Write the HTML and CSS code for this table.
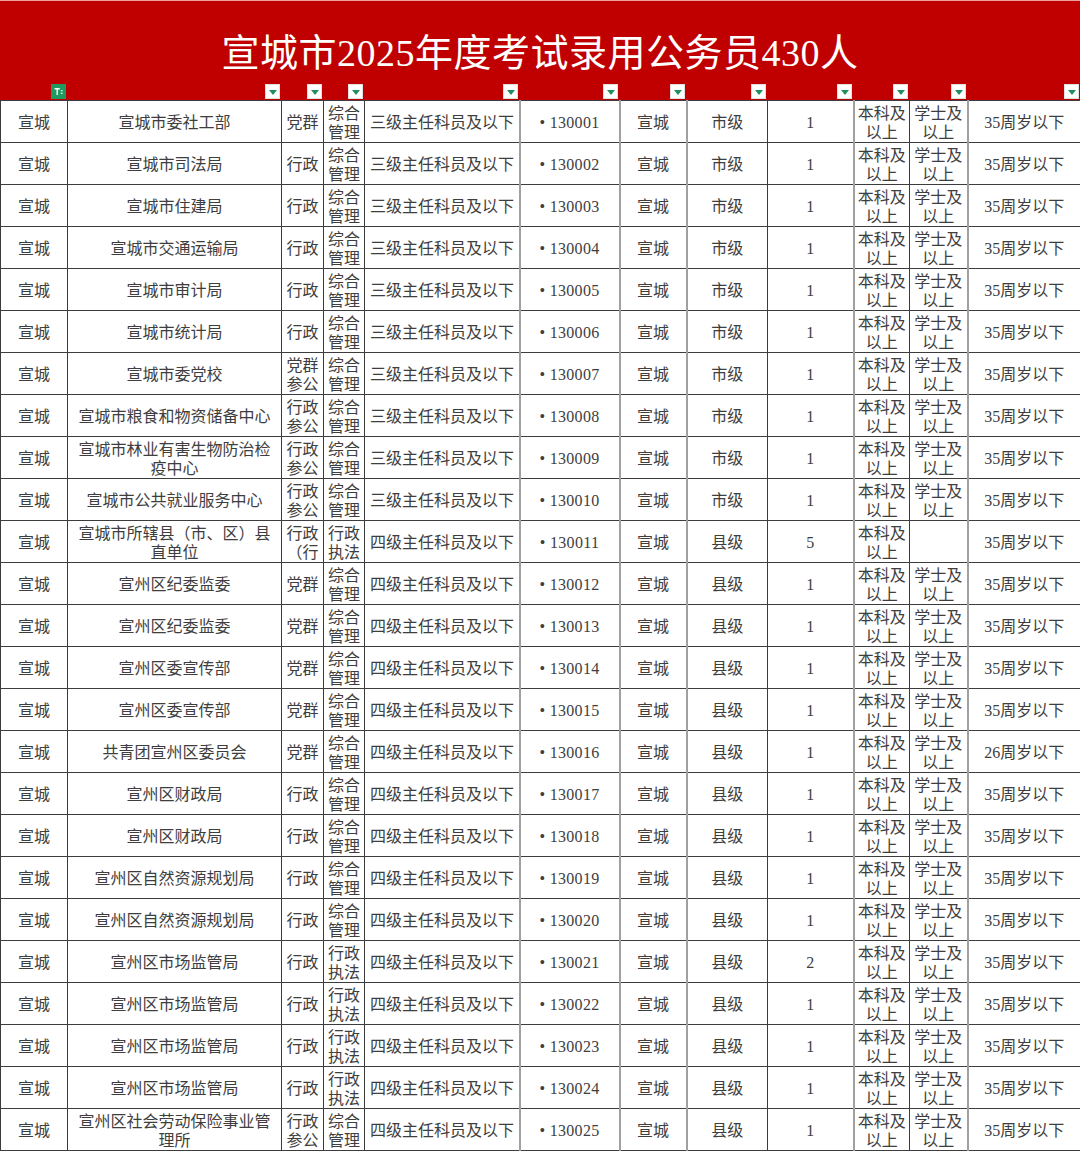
FILE: index.html
```html
<!DOCTYPE html>
<html lang="zh-CN">
<head>
<meta charset="utf-8">
<title>宣城市2025年度考试录用公务员430人</title>
<link rel="stylesheet" href="styles.css">
</head>
<body>
<div class="sheet">
  <header class="banner">
    <h1 class="title">宣城市2025年度考试录用公务员430人</h1>
    <div class="filters">
      <div class="fcell"><span class="fbtn active"><svg viewBox="0 0 15 15" width="15" height="15"><path d="M3 3.5h6v1.6H6.8v6.4H5.2V5.1H3z" fill="#fff"/><rect x="10.2" y="6" width="2" height="1.3" fill="#fff"/><rect x="10.2" y="9" width="2" height="1.3" fill="#fff"/></svg></span></div>
      <div class="fcell"><span class="fbtn"><i class="tri"></i></span></div>
      <div class="fcell"><span class="fbtn"><i class="tri"></i></span></div>
      <div class="fcell"><span class="fbtn"><i class="tri"></i></span></div>
      <div class="fcell"><span class="fbtn"><i class="tri"></i></span></div>
      <div class="fcell"><span class="fbtn"><i class="tri"></i></span></div>
      <div class="fcell"><span class="fbtn"><i class="tri"></i></span></div>
      <div class="fcell"><span class="fbtn"><i class="tri"></i></span></div>
      <div class="fcell"><span class="fbtn"><i class="tri"></i></span></div>
      <div class="fcell"><span class="fbtn"><i class="tri"></i></span></div>
      <div class="fcell"><span class="fbtn"><i class="tri"></i></span></div>
      <div class="fcell"><span class="fbtn"><i class="tri"></i></span></div>
    </div>
  </header>
  <table class="grid">
    <colgroup>
      <col class="c1"><col class="c2"><col class="c3"><col class="c4"><col class="c5"><col class="c6"><col class="c7"><col class="c8"><col class="c9"><col class="c10"><col class="c11"><col class="c12">
    </colgroup>
    <tbody>
      <tr><td>宣城</td><td>宣城市委社工部</td><td>党群</td><td>综合<br>管理</td><td class="lv">三级主任科员及以下</td><td class="id gl">• 130001</td><td class="gl">宣城</td><td class="gl">市级</td><td class="num">1</td><td class="gl">本科及<br>以上</td><td>学士及<br>以上</td><td class="gl">35周岁以下</td></tr>
      <tr><td>宣城</td><td>宣城市司法局</td><td>行政</td><td>综合<br>管理</td><td class="lv">三级主任科员及以下</td><td class="id gl">• 130002</td><td class="gl">宣城</td><td class="gl">市级</td><td class="num">1</td><td class="gl">本科及<br>以上</td><td>学士及<br>以上</td><td class="gl">35周岁以下</td></tr>
      <tr><td>宣城</td><td>宣城市住建局</td><td>行政</td><td>综合<br>管理</td><td class="lv">三级主任科员及以下</td><td class="id gl">• 130003</td><td class="gl">宣城</td><td class="gl">市级</td><td class="num">1</td><td class="gl">本科及<br>以上</td><td>学士及<br>以上</td><td class="gl">35周岁以下</td></tr>
      <tr><td>宣城</td><td>宣城市交通运输局</td><td>行政</td><td>综合<br>管理</td><td class="lv">三级主任科员及以下</td><td class="id gl">• 130004</td><td class="gl">宣城</td><td class="gl">市级</td><td class="num">1</td><td class="gl">本科及<br>以上</td><td>学士及<br>以上</td><td class="gl">35周岁以下</td></tr>
      <tr><td>宣城</td><td>宣城市审计局</td><td>行政</td><td>综合<br>管理</td><td class="lv">三级主任科员及以下</td><td class="id gl">• 130005</td><td class="gl">宣城</td><td class="gl">市级</td><td class="num">1</td><td class="gl">本科及<br>以上</td><td>学士及<br>以上</td><td class="gl">35周岁以下</td></tr>
      <tr><td>宣城</td><td>宣城市统计局</td><td>行政</td><td>综合<br>管理</td><td class="lv">三级主任科员及以下</td><td class="id gl">• 130006</td><td class="gl">宣城</td><td class="gl">市级</td><td class="num">1</td><td class="gl">本科及<br>以上</td><td>学士及<br>以上</td><td class="gl">35周岁以下</td></tr>
      <tr><td>宣城</td><td>宣城市委党校</td><td>党群<br>参公</td><td>综合<br>管理</td><td class="lv">三级主任科员及以下</td><td class="id gl">• 130007</td><td class="gl">宣城</td><td class="gl">市级</td><td class="num">1</td><td class="gl">本科及<br>以上</td><td>学士及<br>以上</td><td class="gl">35周岁以下</td></tr>
      <tr><td>宣城</td><td>宣城市粮食和物资储备中心</td><td>行政<br>参公</td><td>综合<br>管理</td><td class="lv">三级主任科员及以下</td><td class="id gl">• 130008</td><td class="gl">宣城</td><td class="gl">市级</td><td class="num">1</td><td class="gl">本科及<br>以上</td><td>学士及<br>以上</td><td class="gl">35周岁以下</td></tr>
      <tr><td>宣城</td><td>宣城市林业有害生物防治检<br>疫中心</td><td>行政<br>参公</td><td>综合<br>管理</td><td class="lv">三级主任科员及以下</td><td class="id gl">• 130009</td><td class="gl">宣城</td><td class="gl">市级</td><td class="num">1</td><td class="gl">本科及<br>以上</td><td>学士及<br>以上</td><td class="gl">35周岁以下</td></tr>
      <tr><td>宣城</td><td>宣城市公共就业服务中心</td><td>行政<br>参公</td><td>综合<br>管理</td><td class="lv">三级主任科员及以下</td><td class="id gl">• 130010</td><td class="gl">宣城</td><td class="gl">市级</td><td class="num">1</td><td class="gl">本科及<br>以上</td><td>学士及<br>以上</td><td class="gl">35周岁以下</td></tr>
      <tr><td>宣城</td><td>宣城市所辖县（市、区）县<br>直单位</td><td>行政<br>（行</td><td>行政<br>执法</td><td class="lv">四级主任科员及以下</td><td class="id gl">• 130011</td><td class="gl">宣城</td><td class="gl">县级</td><td class="num">5</td><td class="gl">本科及<br>以上</td><td></td><td class="gl">35周岁以下</td></tr>
      <tr><td>宣城</td><td>宣州区纪委监委</td><td>党群</td><td>综合<br>管理</td><td class="lv">四级主任科员及以下</td><td class="id gl">• 130012</td><td class="gl">宣城</td><td class="gl">县级</td><td class="num">1</td><td class="gl">本科及<br>以上</td><td>学士及<br>以上</td><td class="gl">35周岁以下</td></tr>
      <tr><td>宣城</td><td>宣州区纪委监委</td><td>党群</td><td>综合<br>管理</td><td class="lv">四级主任科员及以下</td><td class="id gl">• 130013</td><td class="gl">宣城</td><td class="gl">县级</td><td class="num">1</td><td class="gl">本科及<br>以上</td><td>学士及<br>以上</td><td class="gl">35周岁以下</td></tr>
      <tr><td>宣城</td><td>宣州区委宣传部</td><td>党群</td><td>综合<br>管理</td><td class="lv">四级主任科员及以下</td><td class="id gl">• 130014</td><td class="gl">宣城</td><td class="gl">县级</td><td class="num">1</td><td class="gl">本科及<br>以上</td><td>学士及<br>以上</td><td class="gl">35周岁以下</td></tr>
      <tr><td>宣城</td><td>宣州区委宣传部</td><td>党群</td><td>综合<br>管理</td><td class="lv">四级主任科员及以下</td><td class="id gl">• 130015</td><td class="gl">宣城</td><td class="gl">县级</td><td class="num">1</td><td class="gl">本科及<br>以上</td><td>学士及<br>以上</td><td class="gl">35周岁以下</td></tr>
      <tr><td>宣城</td><td>共青团宣州区委员会</td><td>党群</td><td>综合<br>管理</td><td class="lv">四级主任科员及以下</td><td class="id gl">• 130016</td><td class="gl">宣城</td><td class="gl">县级</td><td class="num">1</td><td class="gl">本科及<br>以上</td><td>学士及<br>以上</td><td class="gl">26周岁以下</td></tr>
      <tr><td>宣城</td><td>宣州区财政局</td><td>行政</td><td>综合<br>管理</td><td class="lv">四级主任科员及以下</td><td class="id gl">• 130017</td><td class="gl">宣城</td><td class="gl">县级</td><td class="num">1</td><td class="gl">本科及<br>以上</td><td>学士及<br>以上</td><td class="gl">35周岁以下</td></tr>
      <tr><td>宣城</td><td>宣州区财政局</td><td>行政</td><td>综合<br>管理</td><td class="lv">四级主任科员及以下</td><td class="id gl">• 130018</td><td class="gl">宣城</td><td class="gl">县级</td><td class="num">1</td><td class="gl">本科及<br>以上</td><td>学士及<br>以上</td><td class="gl">35周岁以下</td></tr>
      <tr><td>宣城</td><td>宣州区自然资源规划局</td><td>行政</td><td>综合<br>管理</td><td class="lv">四级主任科员及以下</td><td class="id gl">• 130019</td><td class="gl">宣城</td><td class="gl">县级</td><td class="num">1</td><td class="gl">本科及<br>以上</td><td>学士及<br>以上</td><td class="gl">35周岁以下</td></tr>
      <tr><td>宣城</td><td>宣州区自然资源规划局</td><td>行政</td><td>综合<br>管理</td><td class="lv">四级主任科员及以下</td><td class="id gl">• 130020</td><td class="gl">宣城</td><td class="gl">县级</td><td class="num">1</td><td class="gl">本科及<br>以上</td><td>学士及<br>以上</td><td class="gl">35周岁以下</td></tr>
      <tr><td>宣城</td><td>宣州区市场监管局</td><td>行政</td><td>行政<br>执法</td><td class="lv">四级主任科员及以下</td><td class="id gl">• 130021</td><td class="gl">宣城</td><td class="gl">县级</td><td class="num">2</td><td class="gl">本科及<br>以上</td><td>学士及<br>以上</td><td class="gl">35周岁以下</td></tr>
      <tr><td>宣城</td><td>宣州区市场监管局</td><td>行政</td><td>行政<br>执法</td><td class="lv">四级主任科员及以下</td><td class="id gl">• 130022</td><td class="gl">宣城</td><td class="gl">县级</td><td class="num">1</td><td class="gl">本科及<br>以上</td><td>学士及<br>以上</td><td class="gl">35周岁以下</td></tr>
      <tr><td>宣城</td><td>宣州区市场监管局</td><td>行政</td><td>行政<br>执法</td><td class="lv">四级主任科员及以下</td><td class="id gl">• 130023</td><td class="gl">宣城</td><td class="gl">县级</td><td class="num">1</td><td class="gl">本科及<br>以上</td><td>学士及<br>以上</td><td class="gl">35周岁以下</td></tr>
      <tr><td>宣城</td><td>宣州区市场监管局</td><td>行政</td><td>行政<br>执法</td><td class="lv">四级主任科员及以下</td><td class="id gl">• 130024</td><td class="gl">宣城</td><td class="gl">县级</td><td class="num">1</td><td class="gl">本科及<br>以上</td><td>学士及<br>以上</td><td class="gl">35周岁以下</td></tr>
      <tr><td>宣城</td><td>宣州区社会劳动保险事业管<br>理所</td><td>行政<br>参公</td><td>综合<br>管理</td><td class="lv">四级主任科员及以下</td><td class="id gl">• 130025</td><td class="gl">宣城</td><td class="gl">县级</td><td class="num">1</td><td class="gl">本科及<br>以上</td><td>学士及<br>以上</td><td class="gl">35周岁以下</td></tr>
    </tbody>
  </table>
</div>
</body>
</html>
```
FILE: styles.css
```css
* { box-sizing: border-box; }
html, body { margin: 0; padding: 0; background: #fff; }
body {
  width: 1080px;
  height: 1151px;
  overflow: hidden;
  font-family: "Liberation Serif", "Noto Sans CJK SC", serif;
  color: #3e3e3e;
}
.sheet { width: 1080px; }
.banner {
  background: #c00000;
  height: 100px;
  border-top: 1px solid #e8a0a0;
  display: flex;
  flex-direction: column;
}
.title {
  margin: 0;
  height: 83px;
  display: flex;
  align-items: center;
  justify-content: center;
  padding-top: 14px;
  color: #fff;
  font-family: "Liberation Serif", "Noto Sans CJK SC", serif;
  font-weight: 400;
  font-size: 38px;
  letter-spacing: 0.5px;
}
.filters {
  height: 16px;
  display: grid;
  grid-template-columns: 67px 214px 42px 41px 155px 100px 67px 81px 86px 56px 58px 113px;
}
.fcell {
  display: flex;
  justify-content: flex-end;
  align-items: flex-start;
  padding-right: 1px;
}
.fbtn {
  width: 15px;
  height: 15px;
  background: #fff;
  border: 1px solid #e0e0e0;
  display: flex;
  align-items: center;
  justify-content: center;
}
.fbtn.active {
  background: #1f9a61;
  border-color: #1f9a61;
  padding: 0;
}
.fbtn.active svg { display: block; }
.tri {
  width: 0;
  height: 0;
  border-left: 4px solid transparent;
  border-right: 4px solid transparent;
  border-top: 5px solid #1f8f5e;
  margin-top: 1px;
}
.grid {
  width: 1080px;
  border-collapse: collapse;
  table-layout: fixed;
}
.c1 { width: 67px; }
.c2 { width: 214px; }
.c3 { width: 42px; }
.c4 { width: 41px; }
.c5 { width: 155px; }
.c6 { width: 100px; }
.c7 { width: 67px; }
.c8 { width: 81px; }
.c9 { width: 86px; }
.c10 { width: 56px; }
.c11 { width: 58px; }
.c12 { width: 113px; }
.grid td {
  height: 42px;
  padding: 2px 1px 0;
  border: 1px solid #3c3c3c;
  text-align: center;
  vertical-align: middle;
  font-size: 16px;
  line-height: 19px;
  white-space: nowrap;
  overflow: hidden;
  color: #3e3e3e;
}
.grid td.gl { border-left: 2px solid #a0a0a0; }
.grid td.lv { text-align: left; padding-left: 5px; }
.grid td.id { letter-spacing: 0.3px; }
.grid td.num { font-size: 16px; }
```
